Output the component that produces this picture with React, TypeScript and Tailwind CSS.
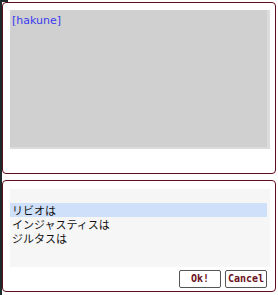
const JP = "font-['MS_UI_Gothic','Noto_Sans_CJK_JP',sans-serif]";

const ITEMS = ['リビオは', 'インジャスティスは', 'ジルタスは'];

export default function App() {
  return (
    <div className="relative flex h-[295px] w-[278px] flex-col gap-[6px] bg-white pl-[2px] pt-[2px]">
      {/* dark edge on the left side */}
      <div className="absolute left-0 top-0 h-full w-[2px] bg-[#1d2a2c]" />
      <div className="absolute left-0 top-0 h-[2px] w-[8px] bg-[#1d2a2c]" />

      {/* top log panel */}
      <section className="h-[172px] w-[274px] rounded-[4px] border border-[#5e0d1c] bg-white p-[7px]">
        <div className="h-[139px] w-[260px] border-r-[3px] border-b-[2px] border-r-[#dcdcdc] border-b-[#dcdcdc] bg-[#d0d0d0] px-[2px] pt-[4px]">
          <div className="font-['Tahoma','DejaVu_Sans',sans-serif] text-[11px] leading-[13px] text-[#3a3aee]">
            [hakune]
          </div>
        </div>
      </section>

      {/* bottom choice panel */}
      <section className="flex h-[112px] w-[274px] flex-col rounded-[4px] border border-[#5e0d1c] bg-white px-[7px] pt-[8px]">
        <div className="flex h-[78px] w-[260px] flex-col bg-[#f6f6f6] pt-[14px]">
          {ITEMS.map((t, i) => (
            <div
              key={t}
              className={`${JP} h-[14px] overflow-hidden pl-[2px] text-[11px] leading-[14px] text-[#111] ${
                i === 0 ? 'bg-[#cfe0fb] w-[257px]' : ''
              }`}
            >
              {t}
            </div>
          ))}
        </div>
        <div className="mt-[3px] flex justify-end gap-[4px] pr-[1px]">
          {['Ok!', 'Cancel'].map((b) => (
            <button
              key={b}
              className="flex h-[18px] w-[42px] items-center justify-center rounded-[2px] border border-[#555] bg-white font-['DejaVu_Sans_Mono',monospace] text-[10px] font-semibold leading-none text-[#6b1020]"
            >
              {b}
            </button>
          ))}
        </div>
      </section>
    </div>
  );
}
